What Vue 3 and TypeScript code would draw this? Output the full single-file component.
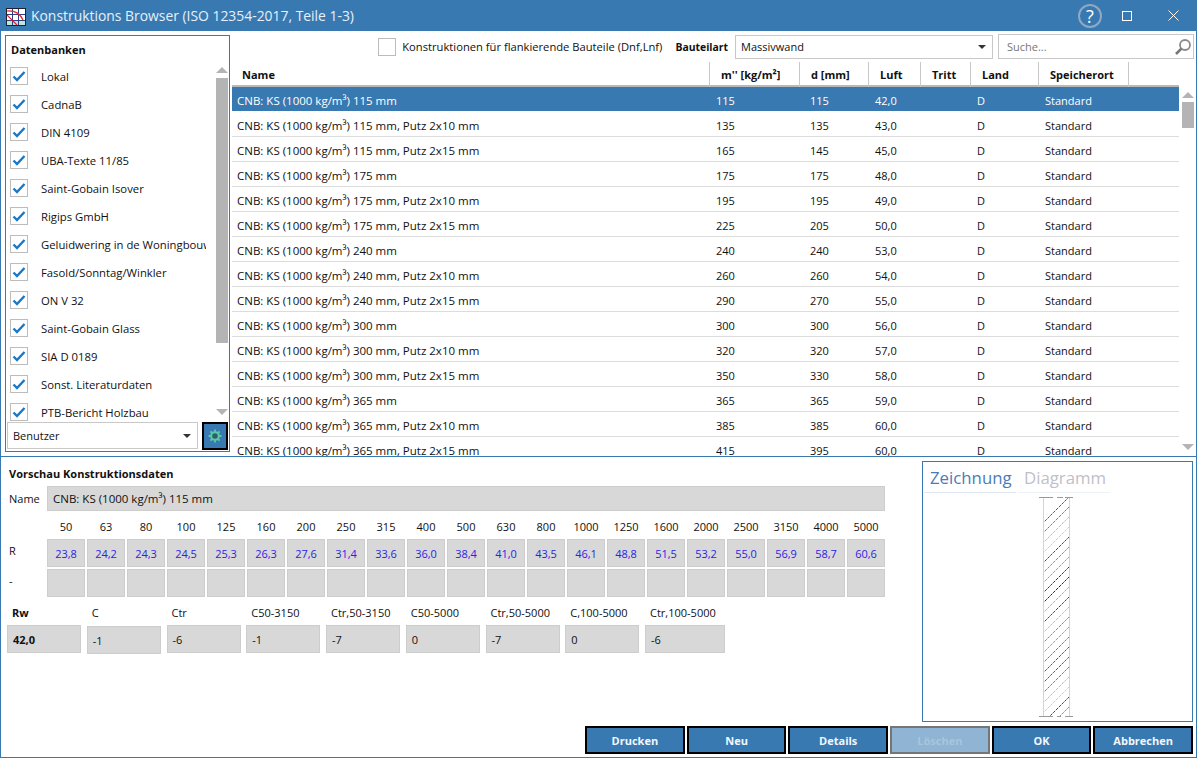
<script setup lang="ts">
const databases: string[] = ['Lokal','CadnaB','DIN 4109','UBA-Texte 11/85','Saint-Gobain Isover','Rigips GmbH','Geluidwering in de Woningbouw','Fasold/Sonntag/Winkler','ON V 32','Saint-Gobain Glass','SIA D 0189','Sonst. Literaturdaten','PTB-Bericht Holzbau']
const headers: string[] = ["Name","m'' [kg/m²]",'d [mm]','Luft','Tritt','Land','Speicherort','']
const rows: [string,number,number,string][] = [
 ['115 mm',115,115,'42,0'],['115 mm, Putz 2x10 mm',135,135,'43,0'],['115 mm, Putz 2x15 mm',165,145,'45,0'],
 ['175 mm',175,175,'48,0'],['175 mm, Putz 2x10 mm',195,195,'49,0'],['175 mm, Putz 2x15 mm',225,205,'50,0'],
 ['240 mm',240,240,'53,0'],['240 mm, Putz 2x10 mm',260,260,'54,0'],['240 mm, Putz 2x15 mm',290,270,'55,0'],
 ['300 mm',300,300,'56,0'],['300 mm, Putz 2x10 mm',320,320,'57,0'],['300 mm, Putz 2x15 mm',350,330,'58,0'],
 ['365 mm',365,365,'59,0'],['365 mm, Putz 2x10 mm',385,385,'60,0'],['365 mm, Putz 2x15 mm',415,395,'60,0']]
const freqs: number[] = [50,63,80,100,125,160,200,250,315,400,500,630,800,1000,1250,1600,2000,2500,3150,4000,5000]
const rValues: string[] = ['23,8','24,2','24,3','24,5','25,3','26,3','27,6','31,4','33,6','36,0','38,4','41,0','43,5','46,1','48,8','51,5','53,2','55,0','56,9','58,7','60,6']
const ratings: {label:string;value:string}[] = [
 {label:'Rw',value:'42,0'},{label:'C',value:'-1'},{label:'Ctr',value:'-6'},{label:'C50-3150',value:'-1'},
 {label:'Ctr,50-3150',value:'-7'},{label:'C50-5000',value:'0'},{label:'Ctr,50-5000',value:'-7'},{label:'C,100-5000',value:'0'},{label:'Ctr,100-5000',value:'-6'}]
const buttons: {label:string;disabled?:boolean}[] = [{label:'Drucken'},{label:'Neu'},{label:'Details'},{label:'Löschen',disabled:true},{label:'OK'},{label:'Abbrechen'}]
const shades: string[] = ['#555','#777','#bbb','#ccc','#444','#888','#999','#333','#222','#aaa','#444','#bbb','#888','#999','#777','#555']
const hatch: {y:number;c:string}[] = Array.from({length:24},(_,i)=>({y:i*10,c:shades[i%shades.length]}))
</script>

<template>
  <div class="window">
    <header class="titlebar">
      <svg class="appicon" width="20" height="18" viewBox="0 0 20 18">
        <rect x="0.5" y="0.5" width="19" height="17" fill="#fff" stroke="#1c2230"/>
        <rect x="1" y="12" width="18" height="5" fill="#bfe6da"/>
        <path d="M1 6.5H19M1 12.5H19M6.5 1V17M12.5 1V17" stroke="#2f3f80" fill="none"/>
        <path d="M1 3C9 2.5 14 5 17 12" stroke="#e0222c" stroke-width="1.2" fill="none"/>
        <path d="M1 7L11 17" stroke="#e0222c" stroke-width="1.1" fill="none"/>
      </svg>
      <span class="title">Konstruktions Browser (ISO 12354-2017, Teile 1-3)</span>
      <span class="help">?</span>
      <svg class="winbtn max" width="10" height="10" viewBox="0 0 10 10"><rect x="0.5" y="0.5" width="9" height="9" fill="none" stroke="#fff"/></svg>
      <svg class="winbtn close" width="11" height="11" viewBox="0 0 11 11"><path d="M0.5 0.5L10.5 10.5M10.5 0.5L0.5 10.5" stroke="#fff" fill="none"/></svg>
    </header>

    <section class="upper">
      <aside class="dbpanel">
        <h3 class="dbtitle">Datenbanken</h3>
        <div class="dblist">
          <ul class="dbitems">
            <li v-for="d in databases" :key="d" class="dbitem">
              <span class="check"><svg width="14" height="12" viewBox="0 0 14 12"><path d="M1.5 6.5L5 10L12.5 2" fill="none" stroke="#1a78c8" stroke-width="2.4"/></svg></span>
              <span class="dbname">{{ d }}</span>
            </li>
          </ul>
          <div class="vscroll dbscroll">
            <i class="arrow up"></i>
            <i class="thumb dbthumb"></i>
            <i class="arrow down"></i>
          </div>
        </div>
        <div class="dbfoot">
          <div class="combo userfield"><span>Benutzer</span><i class="caret"></i></div>
          <button class="gear" type="button" aria-label="Einstellungen">
            <svg width="14" height="14" viewBox="0 0 14 14">
              <circle cx="7" cy="7" r="3.8" fill="#2d5f70" stroke="#5cc8a6" stroke-width="2"/>
              <path d="M7 0.5V3M7 11V13.5M0.5 7H3M11 7H13.5M2.4 2.4L4 4M10 10L11.6 11.6M11.6 2.4L10 4M4 10L2.4 11.6" stroke="#5cc8a6" stroke-width="1.8"/>
            </svg>
          </button>
        </div>
      </aside>

      <div class="browser">
        <div class="toolbar">
          <span class="box"></span>
          <span class="flank">Konstruktionen für flankierende Bauteile (Dnf,Lnf)</span>
          <strong class="artlabel">Bauteilart</strong>
          <div class="combo artcombo"><span>Massivwand</span><i class="caret"></i></div>
          <div class="search">
            <span>Suche...</span>
            <svg width="18" height="18" viewBox="0 0 18 18"><circle cx="11" cy="7" r="5" fill="none" stroke="#8a8a8a" stroke-width="1.8"/><path d="M7.4 10.6L2 16" stroke="#777" stroke-width="2.6"/></svg>
          </div>
        </div>
        <div class="thead">
          <div v-for="(h,i) in headers" :key="i" class="th">{{ h }}</div>
        </div>
        <div class="tbody">
          <div class="rows">
            <div v-for="(r,i) in rows" :key="i" class="tr" :class="{selected:i===0}">
              <div class="td namecell">CNB: KS (1000 kg/m³) {{ r[0] }}</div>
              <div class="td">{{ r[1] }}</div>
              <div class="td dcell">{{ r[2] }}</div>
              <div class="td">{{ r[3] }}</div>
              <div class="td"></div>
              <div class="td">D</div>
              <div class="td">Standard</div>
            </div>
          </div>
          <div class="vscroll tablescroll">
            <i class="arrow up"></i>
            <i class="thumb tablethumb"></i>
            <i class="arrow down"></i>
          </div>
        </div>
      </div>
    </section>

    <section class="lower">
      <div class="preview">
        <h3 class="prevtitle">Vorschau Konstruktionsdaten</h3>
        <div class="namerow"><span class="namelabel">Name</span><div class="field namefield">CNB: KS (1000 kg/m³) 115 mm</div></div>
        <div class="bands">
          <span></span>
          <div class="freqgrid"><span v-for="f in freqs" :key="f" class="freq">{{ f }}</span></div>
          <span class="rowlabel">R</span>
          <div class="freqgrid"><span v-for="(v,i) in rValues" :key="i" class="cell blue">{{ v }}</span></div>
          <span class="rowlabel">-</span>
          <div class="freqgrid second"><span v-for="f in freqs" :key="f" class="cell"></span></div>
        </div>
        <div class="ratings">
          <div v-for="(r,i) in ratings" :key="r.label" class="rating" :class="{rw:i===0,c:i===1}">
            <span class="rlabel">{{ r.label }}</span>
            <div class="field rvalue">{{ r.value }}</div>
          </div>
        </div>
      </div>
      <div class="drawing">
        <div class="tabs">
          <span class="tab active">Zeichnung</span>
          <span class="tab">Diagramm</span>
        </div>
        <svg class="wall" width="34" height="221" viewBox="0 0 34 221">
          <defs><clipPath id="wallclip"><rect x="4" y="0" width="26" height="220"/></clipPath></defs>
          <g clip-path="url(#wallclip)">
            <path v-for="h in hatch" :key="h.y" :d="`M0 ${h.y+30}L34 ${h.y-4}`" :stroke="h.c" stroke-width="1" stroke-dasharray="3 1" fill="none"/>
          </g>
          <path d="M4.5 0V220M30.5 0V220" stroke="#d4d4d4" fill="none"/>
          <path d="M0 0.5H14M18 0.5H24M26 0.5H34M0 219.5H14M18 219.5H22M26 219.5H34" stroke="#999" fill="none"/>
        </svg>
      </div>
    </section>

    <footer class="footer">
      <button v-for="b in buttons" :key="b.label" type="button" class="action" :class="{disabled:b.disabled}">{{ b.label }}</button>
    </footer>
  </div>
</template>

<style>
html, body { margin: 0; background: #fff; }
</style>

<style scoped>
.window {
  --blue: #3979b2;
  width: 1197px; height: 758px; box-sizing: border-box; overflow: hidden; background: #fff;
  border: 1px solid var(--blue); border-top: 0;
  display: flex; flex-direction: column;
  font-family: "Open Sans", sans-serif; font-size: 11px; color: #111;
}
h3 { margin: 0; font-size: 11px; font-weight: 700; }
ul { margin: 0; padding: 0; list-style: none; }
.titlebar { flex: none; height: 31px; margin: 0 -1px; background: var(--blue); display: flex; align-items: center; color: #fff; }
.appicon { margin-left: 6px; margin-top: 3px; }
.title { margin-left: 5px; font-size: 13.9px; color: #e6f0f8; flex: 1; }
.help { width: 20px; height: 20px; border: 2px solid #8fa9c2; border-radius: 50%; text-align: center; line-height: 20px; font-size: 18px; margin-right: 20px; }
.winbtn.max { margin-right: 36px; }
.winbtn.close { margin-right: 18px; }

.upper { flex: none; height: 425px; display: flex; border-bottom: 1px solid var(--blue); box-sizing: content-box; overflow: hidden; }
.dbpanel { flex: none; width: 223px; height: 415px; margin: 4px 0 0 4px; border: 1px solid var(--blue); display: flex; flex-direction: column; }
.dbtitle { height: 26px; line-height: 28px; padding-left: 5px; flex: none; }
.dblist { flex: 1; display: flex; min-height: 0; }
.dbitems { flex: 1; min-width: 0; overflow: hidden; }
.dbitem { height: 28px; display: flex; align-items: center; padding-left: 4px; }
.check { width: 16px; height: 16px; border: 1px solid #bcbcbc; display: flex; align-items: center; justify-content: center; flex: none; }
.dbname { margin-left: 13px; white-space: nowrap; overflow: hidden; width: 165px; font-size: 11.3px; }
.dbfoot { flex: none; display: flex; padding: 1px 0 1px 1px; gap: 4px; height: 30px; box-sizing: border-box; }
.combo { border: 1px solid #c8c8c8; display: flex; align-items: center; justify-content: space-between; box-sizing: border-box; background: #fff; padding: 0 6px 0 5px; }
.userfield { width: 191px; height: 27px; }
.caret { width: 0; height: 0; border-left: 4px solid transparent; border-right: 4px solid transparent; border-top: 4px solid #333; }
.gear { width: 26px; height: 28px; box-sizing: border-box; border: 2px solid #000; background: var(--blue); padding: 0; display: flex; align-items: center; justify-content: center; }

.vscroll { flex: none; width: 14px; display: flex; flex-direction: column; align-items: center; }
.arrow { width: 0; height: 0; border-left: 6px solid transparent; border-right: 6px solid transparent; flex: none; }
.arrow.up { border-bottom: 6px solid #b4b4b4; }
.arrow.down { border-top: 6px solid #b4b4b4; margin-top: auto; }
.thumb { display: block; background: #b4b4b4; width: 12px; flex: none; margin-top: 5px; }
.dbscroll .arrow.up { margin-top: 5px; }
.dbscroll .arrow.down { margin-bottom: 6px; }
.dbthumb { height: 265px; }
.tablescroll { width: 15px; margin-left: 1px; }
.tablescroll .arrow.up { margin-top: 5px; }
.tablescroll .arrow.down { margin-bottom: 6px; }
.tablethumb { height: 26px; margin-top: 4px; }

.browser { flex: 1; min-width: 0; margin-left: 2px; display: flex; flex-direction: column; }
.toolbar { flex: none; height: 31px; display: flex; align-items: center; padding-right: 2px; justify-content: flex-end; }
.box { width: 16px; height: 16px; border: 1px solid #bcbcbc; margin-right: 6px; }
.flank { margin-right: 13px; font-size: 11.2px; }
.artlabel { font-weight: 700; margin-right: 7px; font-size: 10.4px; }
.artcombo { width: 258px; height: 24px; margin-right: 5px; }
.search { width: 196px; height: 25px; box-sizing: border-box; border: 1px solid #c8c8c8; display: flex; align-items: center; justify-content: space-between; padding: 0 1px 0 8px; color: #777; }
.thead, .tr { display: grid; grid-template-columns: 478px 90px 69px 52px 50px 68px 90px; }
.thead { flex: none; height: 25px; border-bottom: 2px solid #b9b9b9; grid-template-columns: 478px 90px 69px 52px 50px 68px 90px 50px; width: 947px; box-sizing: border-box; }
.th { font-weight: 700; padding-left: 11px; line-height: 25px; border-right: 1px solid #c8c8c8; box-sizing: border-box; white-space: nowrap; }
.th:first-child { padding-left: 10px; }
.th:last-child { border-right: 0; }
.tbody { flex: 1; min-height: 0; display: flex; overflow: hidden; }
.rows { width: 947px; flex: none; }
.tr { height: 25px; box-sizing: border-box; border-bottom: 1px solid #dcdcdc; line-height: 27px; }
.tr.selected { background: var(--blue); color: #fff; border-bottom-color: #fff; }
.td { padding-left: 6px; white-space: nowrap; }
.namecell { padding-left: 5px; font-size: 11.5px; }
.dcell { padding-left: 10px; }

.lower { flex: 1; min-height: 0; display: flex; }
.preview { width: 921px; flex: none; padding: 9px 0 0 6px; box-sizing: border-box; }
.prevtitle { height: 19px; line-height: 15px; padding-left: 2px; }
.namerow { display: flex; align-items: center; height: 25px; margin-top: 1px; }
.namelabel { width: 40px; flex: none; padding-left: 2px; box-sizing: border-box; }
.field { background: #d8d8d8; border: 1px solid #cdcdcd; box-sizing: border-box; display: flex; align-items: center; padding-left: 5px; }
.namefield { width: 838px; height: 25px; font-size: 11.5px; }
.bands { display: grid; grid-template-columns: 40px 838px; margin-top: 5px; }
.rowlabel { padding: 4px 0 0 2px; }
.freqgrid { display: grid; grid-template-columns: repeat(21, 1fr); column-gap: 2px; margin-bottom: 2px; }
.freq { height: 22px; line-height: 22px; text-align: center; margin-bottom: -1px; }
.cell { height: 28px; background: #d8d8d8; border: 1px solid #cdcdcd; box-sizing: border-box; text-align: center; line-height: 28px; }
.blue { color: #2a22e6; }
.ratings { display: flex; gap: 5.75px; margin-top: 5px; }
.rating { width: 74px; flex: none; display: flex; flex-direction: column; }
.rating:last-child { width: 80px; }
.rlabel { height: 21px; line-height: 18px; padding-left: 5px; white-space: nowrap; }
.rw .rlabel { font-weight: 700; }
.rvalue { height: 28px; }
.rw .rvalue { font-weight: 700; }
.c .rvalue { margin-top: 1px; }

.drawing { width: 271px; height: 261px; margin-top: 4px; border: 1px solid var(--blue); box-sizing: border-box; position: relative; flex: none; }
.tabs { display: flex; gap: 2px; padding: 1px 0 0 1px; }
.tab { font-size: 16.8px; line-height: 29px; height: 30px; width: 92px; padding-left: 6px; box-sizing: border-box; color: #bfc0c8; border-bottom: 1px solid #eef2f7; white-space: nowrap; }
.tab.active { color: #4a7cb8; border-bottom-color: #dfe8f2; }
.wall { position: absolute; left: 116px; top: 35px; }

.footer { flex: none; height: 31px; display: flex; justify-content: flex-end; gap: 2px; padding-right: 3px; margin-top: auto; }
.action { width: 99.67px; height: 28px; box-sizing: border-box; border: 2px solid #000; background: var(--blue); color: #f2f6fa; font: 700 11px "Open Sans", sans-serif; padding: 0; }
.action.disabled { background: #90b4d3; border-color: #757575; color: #a9c5dd; }
</style>
